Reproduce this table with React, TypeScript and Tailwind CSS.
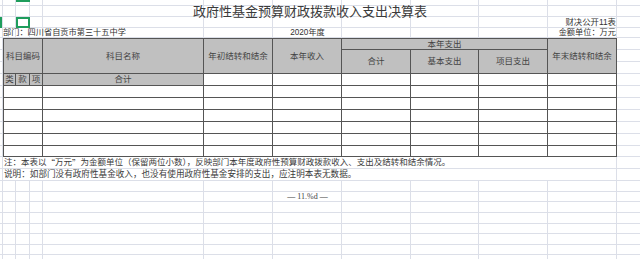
import type { ReactNode } from 'react'

const serif = "font-['Liberation_Serif','Noto_Sans_CJK_SC',serif]"
const sans = "font-['Liberation_Sans','Noto_Sans_CJK_SC',sans-serif]"
const cjk = "font-['Noto_Sans_CJK_SC',sans-serif]"
const green = 'bg-[#1f9d5c]'

const dataRows = [1, 2, 3, 4, 5, 6]
const valueCols = [1, 2, 3, 4, 5, 6, 7]

function Head({ className = '', children }: { className?: string; children?: ReactNode }) {
  return (
    <div
      className={`flex items-center justify-center whitespace-nowrap border-r border-b border-[#555] bg-[#c0c0c0] text-[8.5px] leading-none text-[#444] ${serif} ${className}`}
    >
      {children}
    </div>
  )
}

export default function App() {
  return (
    <div className="h-[259px] w-[640px] overflow-hidden bg-white">
      <div className="grid w-[660px] grid-cols-[3px_13px_14px_13px_161px_69px_69px_69px_68px_69px_69px_43px] grid-rows-[6px_11px_11px_10px_12px_12px_12px_12px_12px_12px_12px_12px_12px_11px_12px_12px_11px_10px_11px_11px_10px_11px_10px_11px]">
        {/* sheet gridlines */}
        <div className="col-span-full row-span-full grid grid-cols-subgrid grid-rows-subgrid">
          {Array.from({ length: 12 * 24 }).map((_, i) => (
            <div key={i} className="border-r border-b border-[#dcdfe8]" />
          ))}
        </div>

        {/* selection marks */}
        <div className={`col-start-3 row-start-1 h-[2px] self-start ${green}`} />
        <div className={`col-start-1 row-start-3 w-[2px] ${green}`} />
        <div className="col-start-3 row-start-3 border-2 border-[#1f9d5c]" />

        {/* title */}
        <div className={`col-start-2 col-span-10 row-start-2 flex items-center justify-center whitespace-nowrap text-[13px] leading-none text-[#3a3a3a] ${serif}`}>
          政府性基金预算财政拨款收入支出决算表
        </div>
        <div className={`col-start-8 col-span-4 row-start-3 flex items-center justify-end whitespace-nowrap pr-px text-[8.4px] leading-none text-[#333] ${sans}`}>
          财决公开11表
        </div>
        <div className={`col-start-2 col-span-5 row-start-4 flex items-center whitespace-nowrap text-[8.2px] leading-none text-[#333] ${sans}`}>
          部门：四川省自贡市第三十五中学
        </div>
        <div className={`col-start-7 row-start-4 flex items-center justify-center whitespace-nowrap text-[8.2px] leading-none text-[#333] ${sans}`}>
          2020年度
        </div>
        <div className={`col-start-8 col-span-4 row-start-4 flex items-center justify-end whitespace-nowrap pr-px text-[8.2px] leading-none text-[#333] ${sans}`}>
          金额单位：万元
        </div>

        {/* table header */}
        <Head className="col-start-2 col-span-3 row-start-5 row-span-3 border-l border-t">科目编码</Head>
        <Head className="col-start-5 row-start-5 row-span-3 border-t">科目名称</Head>
        <Head className="col-start-6 row-start-5 row-span-3 border-t">年初结转和结余</Head>
        <Head className="col-start-7 row-start-5 row-span-3 border-t">本年收入</Head>
        <Head className="col-start-8 col-span-3 row-start-5 border-t">本年支出</Head>
        <Head className="col-start-8 row-start-6 row-span-2">合计</Head>
        <Head className="col-start-9 row-start-6 row-span-2">基本支出</Head>
        <Head className="col-start-10 row-start-6 row-span-2">项目支出</Head>
        <Head className="col-start-11 row-start-5 row-span-3 border-t">年末结转和结余</Head>

        <Head className="col-start-2 row-start-8 border-l">类</Head>
        <Head className="col-start-3 row-start-8">款</Head>
        <Head className="col-start-4 row-start-8">项</Head>
        <Head className="col-start-5 row-start-8">合计</Head>
        <div className="col-start-6 col-span-6 row-start-8 grid grid-cols-subgrid">
          {[1, 2, 3, 4, 5, 6].map((c) => (
            <div key={c} className="border-r border-b border-[#555] bg-white" />
          ))}
        </div>

        {/* table body */}
        <div className="col-start-2 col-span-10 row-start-9 row-span-6 grid grid-cols-subgrid grid-rows-subgrid">
          {dataRows.map((r) => (
            <div key={r} className="contents">
              <div className="col-span-3 border-x border-b border-[#555] bg-white" />
              {valueCols.map((c) => (
                <div key={c} className="border-r border-b border-[#555] bg-white" />
              ))}
            </div>
          ))}
        </div>

        {/* notes */}
        <div className={`col-start-2 col-span-10 row-start-15 flex items-center whitespace-nowrap border-r border-b border-[#dcdfe8] bg-white pl-px text-[8.5px] leading-none text-[#3a3a3a] ${serif}`}>
          注：本表以<span className={cjk}>“</span>万元<span className={cjk}>”</span>为金额单位（保留两位小数），反映部门本年度政府性预算财政拨款收入、支出及结转和结余情况。
        </div>
        <div className={`col-start-2 col-span-10 row-start-16 flex items-center whitespace-nowrap border-r border-b border-[#dcdfe8] bg-white pl-px text-[8.6px] leading-none text-[#3a3a3a] ${serif}`}>
          说明：如部门没有政府性基金收入，也没有使用政府性基金安排的支出，应注明本表无数据。
        </div>

        <div className={`col-start-7 row-start-18 flex items-center justify-center whitespace-nowrap text-[8px] leading-none text-[#444] ${serif}`}>
          — 11.%d —
        </div>
      </div>
    </div>
  )
}
